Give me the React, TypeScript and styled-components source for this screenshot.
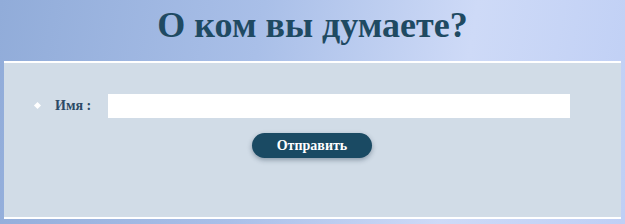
import styled, { createGlobalStyle } from "styled-components";

const GlobalStyle = createGlobalStyle`
html, body {
  margin: 0;
  padding: 0;
}
body {
  font-family: "Liberation Serif", "Times New Roman", serif;
}
`

const Page = styled.div`
width: 625px;
height: 224px;
overflow: hidden;
background: linear-gradient(100deg, #91acd9 0%, #a9bfe8 40%, #cedaf7 72%, #bfcff5 100%);
padding: 0 4px;
box-sizing: border-box;
`

const Title = styled.h1`
margin: 0;
height: 61px;
line-height: 50px;
text-align: center;
font-size: 36px;
font-weight: bold;
color: #1f4a62;
`

const Panel = styled.div`
background-color: #d1dce7;
border-top: 2px solid #ffffff;
border-bottom: 2px solid #ffffff;
height: 158px;
padding: 31px 0 0 30px;
box-sizing: border-box;
`

const Row = styled.div`
display: flex;
align-items: center;
`

const Bullet = styled.span`
width: 5px;
height: 5px;
background: #ffffff;
transform: rotate(45deg);
margin: -2px 15px 0 1px;
`

const Label = styled.label`
width: 53px;
font-size: 14px;
font-weight: bold;
color: #2b4a66;
`

const Input = styled.input`
width: 462px;
height: 24px;
border: none;
outline: none;
background: #ffffff;
box-sizing: border-box;
`

const SendButton = styled.button`
display: block;
margin: 15px 0 0 218px;
width: 120px;
height: 25px;
border: none;
border-radius: 13px;
background-color: #1a4a63;
color: #ffffff;
font-family: "Liberation Serif", "Times New Roman", serif;
font-size: 14px;
font-weight: bold;
box-shadow: 0 2px 5px rgba(30, 50, 70, 0.4);
cursor: pointer;
`

const App = () => {
    return <>
        <GlobalStyle />
        <Page>
            <Title>О ком вы думаете?</Title>
            <Panel>
                <Row>
                    <Bullet />
                    <Label>Имя :</Label>
                    <Input type="text" />
                </Row>
                <SendButton>Отправить</SendButton>
            </Panel>
        </Page>
    </>
}

export default App
